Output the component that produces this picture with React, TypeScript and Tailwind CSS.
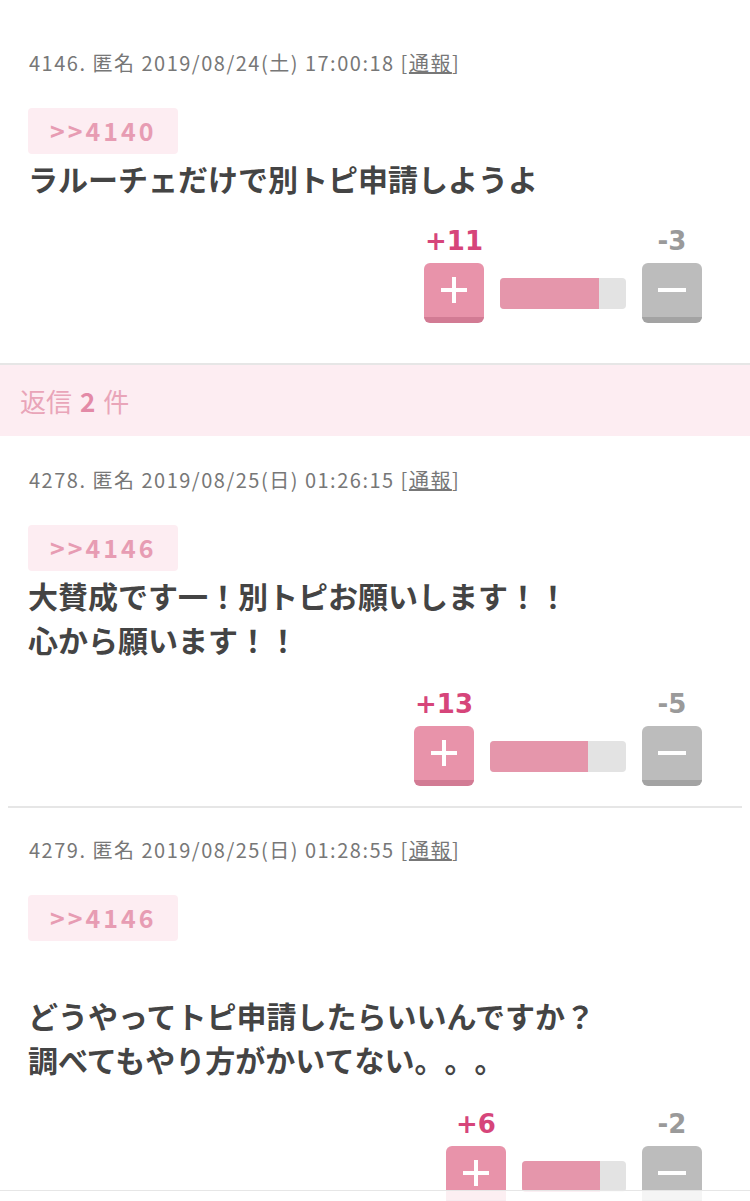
import { Fragment } from 'react';

interface Post {
  no: number;
  date: string;
  anchor: string;
  lines: string[];
  plus: number;
  minus: number;
  barWidth: number;
}

const posts: Post[] = [
  {
    no: 4146,
    date: '2019/08/24(土) 17:00:18',
    anchor: '>>4140',
    lines: ['ラルーチェだけで別トピ申請しようよ'],
    plus: 11,
    minus: 3,
    barWidth: 126,
  },
  {
    no: 4278,
    date: '2019/08/25(日) 01:26:15',
    anchor: '>>4146',
    lines: ['大賛成です一！別トピお願いします！！', '心から願います！！'],
    plus: 13,
    minus: 5,
    barWidth: 136,
  },
  {
    no: 4279,
    date: '2019/08/25(日) 01:28:55',
    anchor: '>>4146',
    lines: ['', 'どうやってトピ申請したらいいんですか？', '調べてもやり方がかいてない。。。'],
    plus: 6,
    minus: 2,
    barWidth: 104,
  },
];

const numFont = { fontFamily: '"DejaVu Sans", sans-serif' };

// 投票ボタンとバー
function Vote({ plus, minus, barWidth, top }: { plus: number; minus: number; barWidth: number; top: string }) {
  const ratio = (plus / (plus + minus)) * 100;
  return (
    <div className={`flex justify-end items-end gap-4 pr-5 ${top}`}>
      <div className="flex flex-col items-center">
        <span className="text-[26px] leading-[32px] font-bold text-[#d6457a]" style={numFont}>+{plus}</span>
        <button className="mt-1.5 w-[60px] h-[60px] rounded-md bg-[#e893aa] border-b-[6px] border-[#d27b94] flex items-center justify-center">
          <svg width="30" height="30" viewBox="0 0 30 30">
            <path d="M15 2v26M2 15h26" stroke="#fff" strokeWidth="4" />
          </svg>
        </button>
      </div>
      <div className="h-[31px] mb-[14px] rounded bg-[#e3e3e3] overflow-hidden" style={{ width: barWidth }}>
        <div className="h-full bg-[#e596ab]" style={{ width: `${ratio}%` }}></div>
      </div>
      <div className="flex flex-col items-center">
        <span className="text-[26px] leading-[32px] font-bold text-[#9a9a9a]" style={numFont}>-{minus}</span>
        <button className="mt-1.5 w-[60px] h-[60px] rounded-md bg-[#bcbcbc] border-b-[6px] border-[#a3a3a3] flex items-center justify-center">
          <svg width="30" height="30" viewBox="0 0 30 30">
            <path d="M1 15h28" stroke="#fff" strokeWidth="4" />
          </svg>
        </button>
      </div>
    </div>
  );
}

function PostItem({
  post,
  pad,
  bodyTop = 'mt-[2px]',
  voteTop = 'mt-[27px]',
}: {
  post: Post;
  pad: string;
  bodyTop?: string;
  voteTop?: string;
}) {
  return (
    <div className={`px-7 ${pad}`}>
      <div className="text-[20px] leading-[28px] text-[#777] tracking-[1.5px] pl-px">
        {post.no}. 匿名 {post.date} [<span className="underline">通報</span>]
      </div>
      <div className="mt-[31px] w-[150px] h-[46px] rounded-sm bg-[#fdedf2] flex items-center pl-[22px]">
        <span className="text-[25px] font-bold text-[#e79cb3] tracking-[3px]">{post.anchor}</span>
      </div>
      <div className={`${bodyTop} text-[30px] leading-[44px] font-bold text-[#444]`}>
        {post.lines.map((l, i) => (
          <Fragment key={i}>
            {l}
            {i < post.lines.length - 1 && <br />}
          </Fragment>
        ))}
      </div>
      <Vote plus={post.plus} minus={post.minus} barWidth={post.barWidth} top={voteTop} />
    </div>
  );
}

export default function App() {
  return (
    <div
      className="w-[750px] bg-white [text-spacing-trim:space-all]"
      style={{ fontFamily: '"Noto Sans CJK JP", "Noto Sans", sans-serif' }}
    >
      <PostItem post={posts[0]} pad="pt-[49px] pb-10" voteTop="mt-[25px]" />
      <div className="border-t-2 border-[#e6e6e6] h-[73px] bg-[#fdedf2] flex items-center px-5 text-[26px] text-[#e9a5b9]">
        返信 <span className="font-bold text-[#e38aa7] mx-2">2</span> 件
      </div>
      <PostItem post={posts[1]} pad="pt-[30px] pb-5" />
      <div className="mx-2 border-t-2 border-[#e6e6e6]"></div>
      <PostItem post={posts[2]} pad="pt-[28px] pb-5" bodyTop="mt-[8px]" />
      {/* 画面下部のオーバーレイ */}
      <div className="fixed left-0 right-0 bottom-0 h-[11px] bg-white/85 border-t border-[#e6e6e6]"></div>
    </div>
  );
}
